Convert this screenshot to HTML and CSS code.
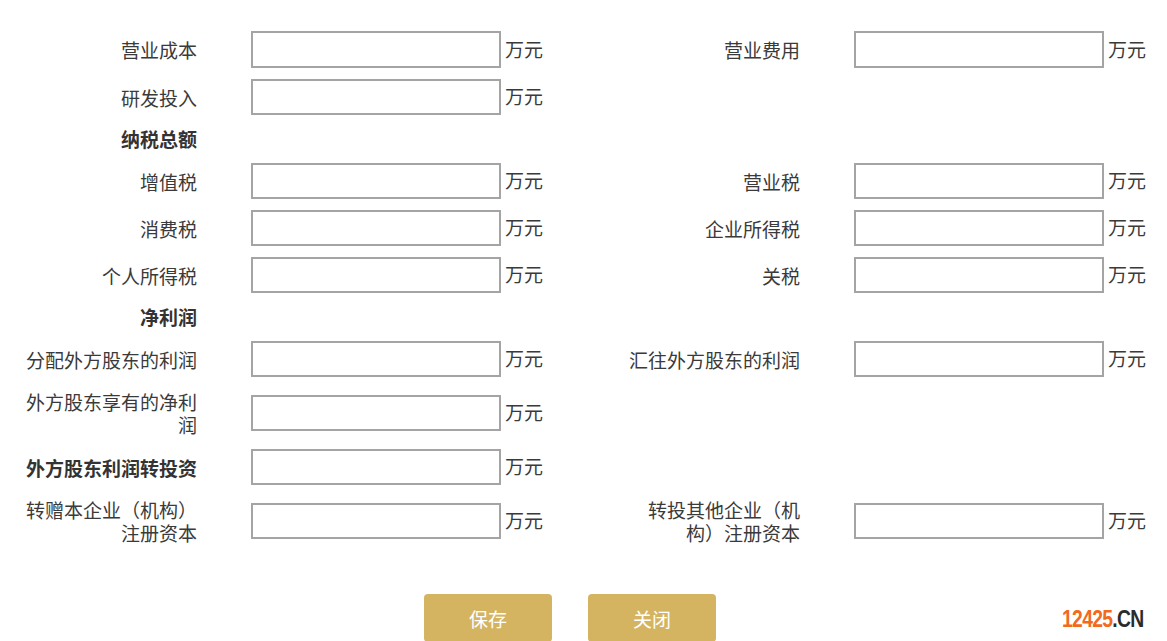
FILE: index.html
```html
<!DOCTYPE html>
<html lang="zh-CN">
<head>
<meta charset="utf-8">
<title>表单</title>
<link rel="stylesheet" href="styles.css">
</head>
<body>
<div class="page">
  <form class="form">
    <div class="row first">
      <div class="cell"><label class="label">营业成本</label><input class="box" type="text"><span class="unit">万元</span></div>
      <div class="cell"><label class="label">营业费用</label><input class="box" type="text"><span class="unit">万元</span></div>
    </div>
    <div class="row">
      <div class="cell"><label class="label">研发投入</label><input class="box" type="text"><span class="unit">万元</span></div>
      <div class="cell"></div>
    </div>
    <div class="row">
      <div class="cell"><span class="label heading">纳税总额</span></div>
    </div>
    <div class="row">
      <div class="cell"><label class="label">增值税</label><input class="box" type="text"><span class="unit">万元</span></div>
      <div class="cell"><label class="label">营业税</label><input class="box" type="text"><span class="unit">万元</span></div>
    </div>
    <div class="row">
      <div class="cell"><label class="label">消费税</label><input class="box" type="text"><span class="unit">万元</span></div>
      <div class="cell"><label class="label">企业所得税</label><input class="box" type="text"><span class="unit">万元</span></div>
    </div>
    <div class="row">
      <div class="cell"><label class="label">个人所得税</label><input class="box" type="text"><span class="unit">万元</span></div>
      <div class="cell"><label class="label">关税</label><input class="box" type="text"><span class="unit">万元</span></div>
    </div>
    <div class="row">
      <div class="cell"><span class="label heading">净利润</span></div>
    </div>
    <div class="row">
      <div class="cell"><label class="label">分配外方股东的利润</label><input class="box" type="text"><span class="unit">万元</span></div>
      <div class="cell"><label class="label">汇往外方股东的利润</label><input class="box" type="text"><span class="unit">万元</span></div>
    </div>
    <div class="row">
      <div class="cell"><label class="label">外方股东享有的净利润</label><input class="box" type="text"><span class="unit">万元</span></div>
      <div class="cell"></div>
    </div>
    <div class="row">
      <div class="cell"><label class="label strong">外方股东利润转投资</label><input class="box" type="text"><span class="unit">万元</span></div>
      <div class="cell"></div>
    </div>
    <div class="row">
      <div class="cell"><label class="label">转赠本企业（机构）注册资本</label><input class="box" type="text"><span class="unit">万元</span></div>
      <div class="cell"><label class="label">转投其他企业（机构）注册资本</label><input class="box" type="text"><span class="unit">万元</span></div>
    </div>
    <div class="actions">
      <button class="btn" type="button">保存</button>
      <button class="btn" type="button">关闭</button>
    </div>
  </form>
  <div class="mark"><span class="num">12425</span><span class="cn">.CN</span></div>
</div>
</body>
</html>
```
FILE: styles.css
```css
html, body {
  margin: 0;
  padding: 0;
  background: #fff;
}
body {
  font-family: "Noto Sans CJK SC", "Noto Sans", sans-serif;
  font-size: 19px;
  color: #3a3a3a;
}
.page {
  position: relative;
  width: 1167px;
  height: 641px;
  overflow: hidden;
}
.form {
  width: 1167px;
  margin: 0;
  padding-top: 26px;
}
.row {
  display: grid;
  grid-template-columns: 603px 564px;
  padding: 5px 0 6px;
}
.row.first .box {
  height: 37px;
}
.cell {
  display: flex;
  align-items: center;
}
.label {
  box-sizing: border-box;
  width: 175px;
  margin-left: 22px;
  margin-right: 54px;
  padding: 2px 0;
  line-height: 23px;
  text-align: right;
  flex: none;
}
.heading {
  font-weight: bold;
  color: #333;
  padding: 1px 0 2px;
}
.strong {
  font-weight: bold;
  color: #333;
}
.box {
  box-sizing: border-box;
  width: 250px;
  height: 36px;
  margin: 0;
  border: 2px solid #a4a4a4;
  border-radius: 0;
  background: #fff;
  flex: none;
}
.unit {
  margin-left: 4px;
  line-height: 23px;
  margin-top: -3px;
  white-space: nowrap;
}
.actions {
  width: 1140px;
  display: flex;
  justify-content: center;
  gap: 36px;
  margin-top: 42px;
}
.btn {
  width: 128px;
  height: 48px;
  border: none;
  border-radius: 4px;
  background: #d5b461;
  color: #fff;
  font-family: "Noto Sans CJK SC", sans-serif;
  font-size: 19px;
  padding: 0;
}
.mark {
  position: absolute;
  left: 1062px;
  top: 606px;
  font-family: "Liberation Sans", Arial, sans-serif;
  font-weight: bold;
  font-size: 23px;
  letter-spacing: -0.8px;
  transform: scaleX(0.84);
  transform-origin: left center;
}
.num { color: #f26a1b; }
.cn { color: #2b2b2b; }
```
